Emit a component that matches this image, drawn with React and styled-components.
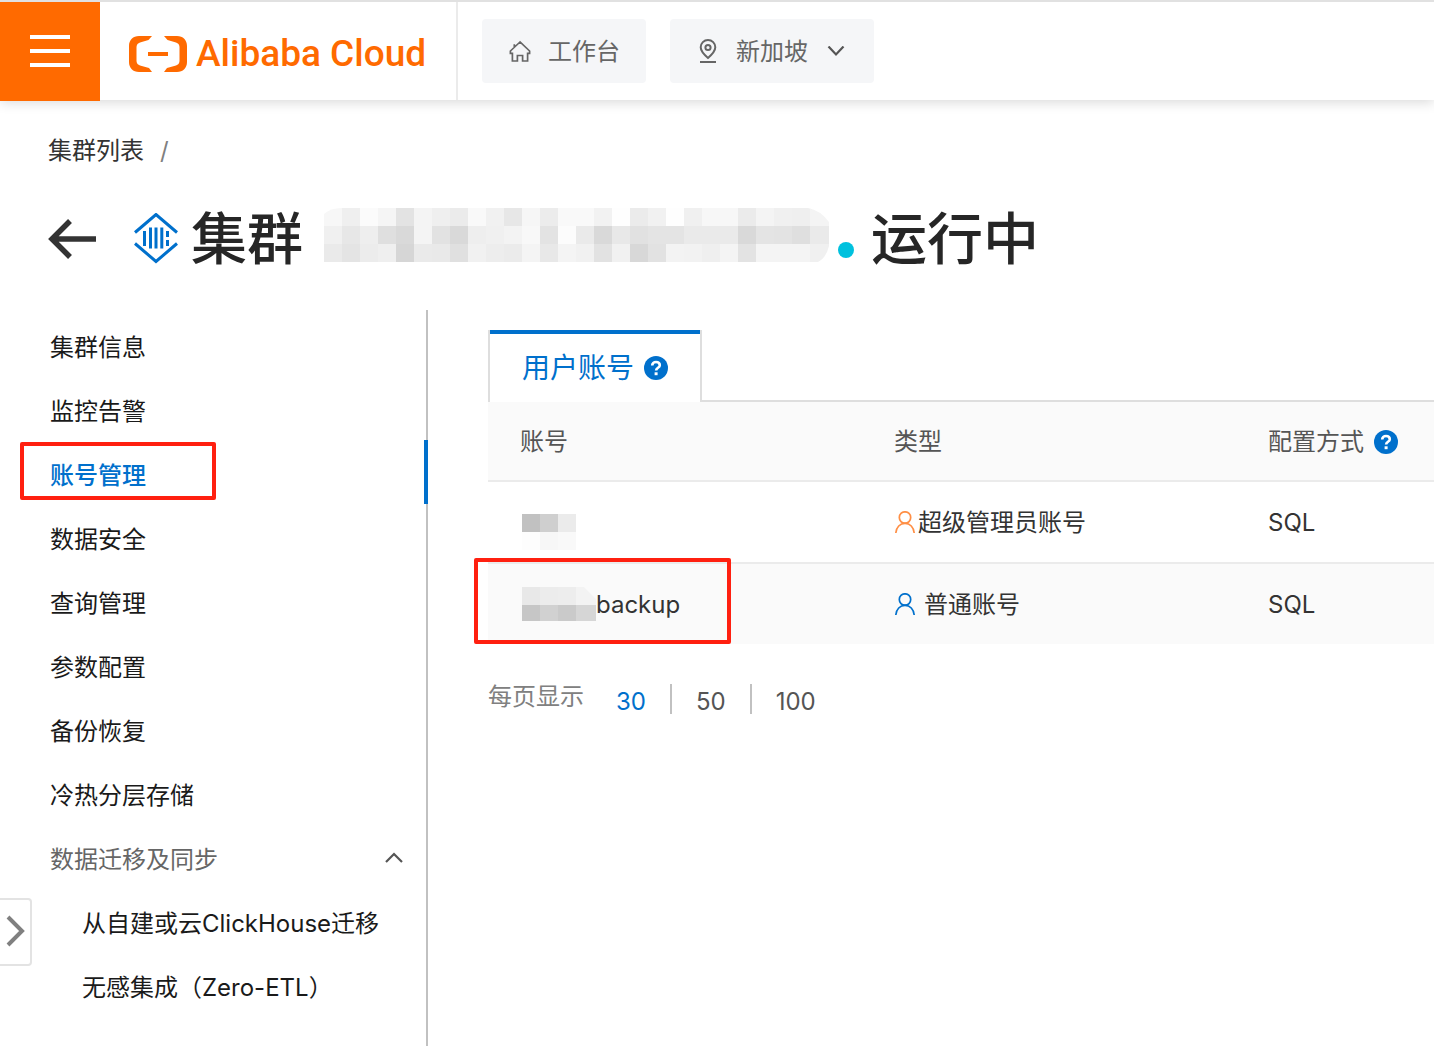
import React from "react";
import styled, { createGlobalStyle, css } from "styled-components";

const blue = "#0070cc";
const orange = "#ff6a00";
const red = "#ff2010";

const GlobalStyle = createGlobalStyle`
  *, *::before, *::after { box-sizing: border-box; }
  body {
    margin: 0;
    background: #fff;
    color: #333;
    font: 400 24px/36px Inter, "Noto Sans CJK SC", sans-serif;
  }
  button, select { font: inherit; color: inherit; }
  a { color: inherit; text-decoration: none; }
  svg { display: block; flex: none; }
`;

const Page = styled.div`
  position: relative;
  display: flex;
  flex-direction: column;
  min-height: 100vh;
  overflow: hidden;
`;

const Header = styled.header`
  display: flex;
  height: 100px;
  border-top: 2px solid #e1e1e1;
  box-shadow: 0 2px 12px rgba(0, 0, 0, 0.16);
`;

const MenuButton = styled.button`
  display: grid;
  place-items: center;
  width: 100px;
  height: 99px;
  padding: 0 0 2px;
  border: 0;
  background: ${orange};
`;

const Brand = styled.a`
  display: flex;
  align-items: center;
  gap: 8px;
  width: 358px;
  padding: 6px 0 0 28px;
  border-right: 2px solid #ebebeb;
  color: ${orange};
`;

const BrandName = styled.span`
  font: 500 37px/56px Roboto, sans-serif;
  white-space: nowrap;
`;

const Tools = styled.div`
  display: flex;
  gap: 24px;
  padding: 17px 24px;
`;

const toolBox = css`
  display: flex;
  align-items: center;
  height: 64px;
  padding: 2px 26px 0;
  border-radius: 4px;
  background: #f5f6f8;
  color: #666;
  white-space: nowrap;
`;

const ToolLink = styled.a`
  ${toolBox}
  gap: 16px;
`;

const RegionPicker = styled.label`
  ${toolBox}
  gap: 16px;
`;

const RegionSelect = styled.select`
  appearance: none;
  height: 36px;
  padding: 0;
  border: 0;
  background: transparent;
  line-height: 36px;
`;

const Breadcrumb = styled.nav`
  display: flex;
  gap: 16px;
  padding: 33px 48px 0;
  color: #333;
`;

const Slash = styled.span`
  color: #808080;
`;

const TitleBar = styled.div`
  display: flex;
  align-items: center;
  height: 84px;
  margin: 28px 48px 0;
`;

const BackLink = styled.a`
  margin-right: 38px;
`;

const Title = styled.h1`
  display: flex;
  align-items: center;
  margin: 0 0 0 13px;
  color: #262626;
  font-size: 56px;
  line-height: 84px;
  font-weight: 500;
  white-space: nowrap;
`;

const TitleName = styled.span`
  margin: 0 8px 8px 21px;
`;

const StatusDot = styled.span`
  width: 16px;
  height: 16px;
  margin: 22px 17px 0 0;
  border-radius: 50%;
  background: #00c1de;
`;

const Body = styled.div`
  display: flex;
  flex: 1;
  margin-top: 29px;
`;

const Sidebar = styled.nav`
  flex: none;
  width: 428px;
  padding-top: 2px;
  border-right: 2px solid #c1c1c1;
  color: #1a1a1a;
`;

const NavList = styled.ul`
  margin: 0;
  padding: 0;
  list-style: none;
`;

const NavItem = styled.li`
  position: relative;
`;

const NavLink = styled.a`
  display: flex;
  align-items: center;
  height: 64px;
  margin-right: -2px;
  padding: 8px 0 0 ${(p) => (p.$nested ? 82 : 50)}px;
  ${(p) =>
    p.$active &&
    css`
      border-right: 4px solid ${blue};
      color: ${blue};
      font-weight: 500;
    `}
`;

const GroupButton = styled.button`
  display: flex;
  align-items: center;
  justify-content: space-between;
  width: 100%;
  height: 64px;
  padding: 8px 22px 0 50px;
  border: 0;
  background: none;
  color: #666;
`;

const Highlight = styled.span`
  position: absolute;
  border: 4px solid ${red};
  border-radius: 2px;
  pointer-events: none;
`;

const NavHighlight = styled(Highlight)`
  left: 20px;
  top: 2px;
  width: 196px;
  height: 58px;
`;

const CellHighlight = styled(Highlight)`
  left: -14px;
  top: -6px;
  width: 257px;
  height: 86px;
`;

const DrawerHandle = styled.button`
  position: absolute;
  left: 0;
  top: 898px;
  display: grid;
  place-items: center;
  width: 32px;
  height: 68px;
  padding: 0;
  border: 2px solid #e3e3e3;
  border-left: 0;
  border-radius: 0 4px 4px 0;
  background: #fff;
`;

const Main = styled.main`
  flex: 1;
  min-width: 0;
  padding: 20px 0 0 60px;
`;

const Tabs = styled.div`
  display: flex;
  height: 72px;
  box-shadow: inset 0 -2px #dedede;
`;

const Tab = styled.button`
  display: flex;
  align-items: center;
  gap: 10px;
  padding: 3px 32px 0;
  border: solid #dedede;
  border-width: 0 2px;
  background: linear-gradient(${blue} 4px, #fff 4px);
  color: ${blue};
  font-size: 28px;
`;

const Table = styled.table`
  width: 100%;
  table-layout: fixed;
  border-collapse: separate;
  border-spacing: 0;
`;

const Row = styled.tr`
  background: ${(p) => (p.$shaded ? "#fafafa" : "#fff")};
`;

const HeadCell = styled.th`
  width: ${(p) => (p.$rest ? "auto" : "374px")};
  height: 80px;
  padding: 2px 0 0 32px;
  border-bottom: 2px solid #ebebeb;
  color: #555;
  font-weight: 400;
  text-align: left;
`;

const Cell = styled.td`
  position: relative;
  height: ${(p) => (p.$last ? 80 : 82)}px;
  padding: 2px 0 0 32px;
  border-bottom: ${(p) => (p.$last ? "0" : "2px solid #ebebeb")};
`;

const Inline = styled.div`
  display: flex;
  align-items: center;
  gap: ${(p) => p.$gap || 0}px;
  white-space: nowrap;
`;

const Masked = styled(Inline)`
  align-items: flex-start;
  padding: ${(p) => (p.$low ? 18 : 0)}px 0 0 2px;
`;

const Pager = styled.div`
  display: flex;
  align-items: center;
  margin-top: 35px;
  color: #808080;
`;

const PagerLabel = styled.span`
  margin-right: 6px;
`;

const PageSize = styled.button`
  height: 30px;
  margin-top: 3px;
  padding: 6px 24px 0;
  border: 0;
  border-left: 2px solid ${(p) => (p.$active ? "transparent" : "#c1c1c1")};
  background: none;
  color: ${(p) => (p.$active ? blue : "#555")};
  line-height: 24px;
`;

const titleMask = [
  "f7 ef fb f5 e3 f4 ef eb f9 f1 e7 f6 ec f9 f9 f2 fe eb f1 fe f0 f7 f7 eb f4 f0 ef f4",
  "f0 e7 ee df d9 f4 e2 d9 ee f0 f3 f8 e3 fc ea d9 e8 e1 e4 e4 ea ea ea d9 e4 e3 df ea",
  "ea e4 ec ef d6 ea e9 e0 f1 ed eb f4 e8 f4 f1 e2 f1 d8 e2 f3 f2 ef f4 e3 f4 f4 f4 f0",
];

function Mosaic({ rows, width, height, clip }) {
  return (
    <svg
      width={width}
      height={height}
      aria-hidden="true"
      shapeRendering="crispEdges"
      style={clip ? { clipPath: `path("${clip}")` } : undefined}
    >
      {rows.map((row, y) =>
        row.split(" ").map((tone, x) => (
          <rect key={`${x}-${y}`} x={x * 18} y={y * 18} width="20" height="18" fill={`#${tone}${tone}${tone}`} />
        ))
      )}
    </svg>
  );
}

function HelpIcon() {
  return (
    <svg width="24" height="24" viewBox="0 0 24 24" role="img" aria-label="帮助">
      <circle cx="12" cy="12" r="12" fill={blue} />
      <path d="M8.200 9.400C8.200 7.200 9.800 6 12 6s3.800 1.200 3.800 3.200c0 2.600-3.700 2.500-3.700 5.300" fill="none" stroke="#fff" strokeWidth="2.600" />
      <rect x="10.600" y="16.300" width="3" height="2.900" fill="#fff" />
    </svg>
  );
}

function UserIcon({ color }) {
  return (
    <svg width="22" height="24" viewBox="0 0 22 24" fill="none" stroke={color} strokeWidth="1.700" aria-hidden="true">
      <circle cx="11" cy="6.500" r="5.700" />
      <path d="M1.800 22c.5-5.800 4.200-9.600 9.200-9.600s8.700 3.800 9.200 9.600" />
    </svg>
  );
}

function Chevron({ d, width, height, color = "#555", stroke = 2.2 }) {
  return (
    <svg width={width} height={height} fill="none" stroke={color} strokeWidth={stroke} aria-hidden="true">
      <path d={d} />
    </svg>
  );
}

const links = ["集群信息", "监控告警", "账号管理", "数据安全", "查询管理", "参数配置", "备份恢复", "冷热分层存储"];
const nestedLinks = ["从自建或云ClickHouse迁移", "无感集成（Zero-ETL）"];

export default function App() {
  return (
    <Page>
      <GlobalStyle />
      <Header>
        <MenuButton aria-label="菜单">
          <svg width="40" height="32" fill="#fff" aria-hidden="true">
            <path d="M0 0h40v4H0zM0 14h40v4H0zM0 28h40v4H0z" />
          </svg>
        </MenuButton>
        <Brand href="#">
          <svg width="60" height="38" viewBox="0 0 60 38" fill="currentColor" aria-hidden="true">
            <path d="M24 1H11C5 1 1 5 1 11v16c0 6 4 10 10 10h13l-3-4-9-2.500c-2-.6-3.500-2.200-3.500-4.500V12c0-2.300 1.500-3.900 3.500-4.500L20.500 5z" />
            <path d="M36 1h13c6 0 10 4 10 10v16c0 6-4 10-10 10H36l3-4 9-2.500c2-.6 3.500-2.200 3.500-4.500V12c0-2.300-1.500-3.900-3.500-4.500L39.500 5z" />
            <path d="M20 17h20v4H20z" />
          </svg>
          <BrandName>Alibaba Cloud</BrandName>
        </Brand>
        <Tools>
          <ToolLink href="#">
            <svg width="24" height="24" viewBox="0 0 24 24" fill="none" stroke="currentColor" strokeWidth="1.700" aria-hidden="true">
              <path d="M12 2 2.400 11v2.300h2V21h5v-5.500h5.200V21h5v-7.700h2V11zM6.300 7.500V4.200" />
            </svg>
            工作台
          </ToolLink>
          <RegionPicker>
            <svg width="24" height="26" viewBox="0 0 24 26" fill="none" stroke="currentColor" strokeWidth="2" aria-hidden="true">
              <path d="M12 19c-5-4.300-7.300-7.500-7.300-10.700a7.300 7.300 0 0 1 14.600 0C19.300 11.500 17 14.700 12 19zM4 23h16" />
              <circle cx="12" cy="8.500" r="2.600" />
            </svg>
            <RegionSelect aria-label="地域" defaultValue="sg">
              <option value="sg">新加坡</option>
            </RegionSelect>
            <Chevron width={24} height={12} d="M4.500 0.500 12 8.500 19.500 0.500" />
          </RegionPicker>
        </Tools>
      </Header>

      <Breadcrumb aria-label="路径">
        <a href="#">集群列表</a>
        <Slash>/</Slash>
      </Breadcrumb>

      <TitleBar>
        <BackLink href="#" aria-label="返回">
          <svg width="48" height="40" fill="none" stroke="#333" strokeWidth="5.500" aria-hidden="true">
            <path d="M22 2 4 20l18 18M4 20h44" />
          </svg>
        </BackLink>
        <svg width="44" height="52" viewBox="0 0 44 52" fill="none" stroke={blue} strokeWidth="3" aria-hidden="true">
          <path d="M1 19.500 22 1.500l21 18M1 30.500l21 18 21-18" />
          <path d="M10.500 18v15M16.500 14.500v21M22 14.500v21M27.800 14.500v21M33.500 18v6M33.500 27v6" />
        </svg>
        <Title>
          集群
          <TitleName>
            <Mosaic
              rows={titleMask}
              width={506}
              height={54}
              clip="M0 6Q6 0 18 0H484Q496 2 505 14V38Q502 50 494 54H0Z"
            />
          </TitleName>
          <StatusDot />
          运行中
        </Title>
      </TitleBar>

      <Body>
        <Sidebar aria-label="集群导航">
          <NavList>
            {links.map((text) => {
              const active = text === "账号管理";
              return (
                <NavItem key={text}>
                  <NavLink href="#" $active={active}>{text}</NavLink>
                  {active && <NavHighlight />}
                </NavItem>
              );
            })}
            <NavItem>
              <GroupButton aria-expanded="true">
                数据迁移及同步
                <Chevron width={20} height={18} d="M2 11 10 3l8 8" />
              </GroupButton>
              <NavList>
                {nestedLinks.map((text) => (
                  <NavItem key={text}>
                    <NavLink href="#" $nested>{text}</NavLink>
                  </NavItem>
                ))}
              </NavList>
            </NavItem>
          </NavList>
        </Sidebar>

        <Main>
          <Tabs role="tablist">
            <Tab role="tab" aria-selected="true">
              用户账号
              <HelpIcon />
            </Tab>
          </Tabs>
          <Table>
            <thead>
              <Row $shaded>
                <HeadCell>账号</HeadCell>
                <HeadCell>类型</HeadCell>
                <HeadCell $rest>
                  <Inline $gap={10}>配置方式<HelpIcon /></Inline>
                </HeadCell>
              </Row>
            </thead>
            <tbody>
              <Row>
                <Cell>
                  <Masked $low><Mosaic rows={["c1 cf eb", "fd f7 f9"]} width={54} height={36} /></Masked>
                </Cell>
                <Cell>
                  <Inline $gap={2}><UserIcon color="#ff8f45" />超级管理员账号</Inline>
                </Cell>
                <Cell>SQL</Cell>
              </Row>
              <Row $shaded>
                <Cell $last>
                  <Masked>
                    <Mosaic rows={["e8 ec ed f3", "c6 d1 ca d6"]} width={74} height={34} clip="M0 0H62L74 12V34H0Z" />
                    backup
                  </Masked>
                  <CellHighlight />
                </Cell>
                <Cell $last>
                  <Inline $gap={8}><UserIcon color={blue} />普通账号</Inline>
                </Cell>
                <Cell $last>SQL</Cell>
              </Row>
            </tbody>
          </Table>
          <Pager>
            <PagerLabel>每页显示</PagerLabel>
            <PageSize $active>30</PageSize>
            <PageSize>50</PageSize>
            <PageSize>100</PageSize>
          </Pager>
        </Main>
      </Body>
      <DrawerHandle aria-label="展开">
        <Chevron width={20} height={34} d="M3 2 17 16 3 30" color="#808080" stroke={4} />
      </DrawerHandle>
    </Page>
  );
}
